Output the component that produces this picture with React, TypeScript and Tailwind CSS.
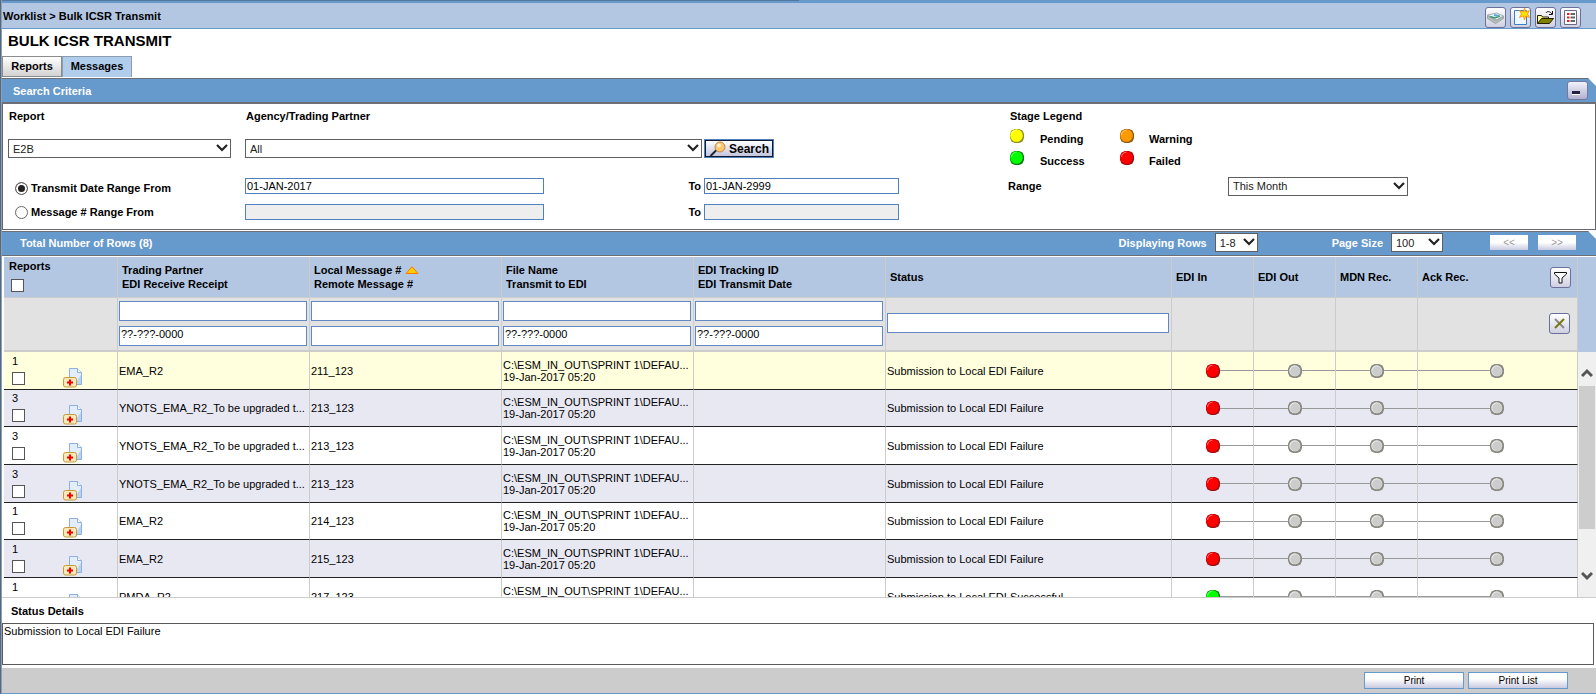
import { useState } from 'react';
import type { ReactNode } from 'react';

const rows = [
  { count: 1, partner: 'EMA_R2', message: '211_123', status: 'Submission to Local EDI Failure', ok: false },
  { count: 3, partner: 'YNOTS_EMA_R2_To be upgraded t...', message: '213_123', status: 'Submission to Local EDI Failure', ok: false },
  { count: 3, partner: 'YNOTS_EMA_R2_To be upgraded t...', message: '213_123', status: 'Submission to Local EDI Failure', ok: false },
  { count: 3, partner: 'YNOTS_EMA_R2_To be upgraded t...', message: '213_123', status: 'Submission to Local EDI Failure', ok: false },
  { count: 1, partner: 'EMA_R2', message: '214_123', status: 'Submission to Local EDI Failure', ok: false },
  { count: 1, partner: 'EMA_R2', message: '215_123', status: 'Submission to Local EDI Failure', ok: false },
  { count: 1, partner: 'PMDA_R2', message: '217_123', status: 'Submission to Local EDI Successful', ok: true },
];

const columns = [
  { top: 'Trading Partner', bottom: 'EDI Receive Receipt', mask: '??-???-0000' },
  { top: 'Local Message #', bottom: 'Remote Message #', mask: '', sorted: true },
  { top: 'File Name', bottom: 'Transmit to EDI', mask: '??-???-0000' },
  { top: 'EDI Tracking ID', bottom: 'EDI Transmit Date', mask: '??-???-0000' },
];

const stages = ['EDI In', 'EDI Out', 'MDN Rec.', 'Ack Rec.'];

const headCell = 'border-r border-b border-[#cccccc] bg-[#b3c7e3] px-1 text-left font-bold';
const filterCell = 'border-r border-b-2 border-[#cccccc] bg-[#e2e2e2] px-px pb-[2px]';
const filterInput = 'block h-5 w-full border border-[#6288c4] bg-white px-[1px] pb-1 text-[11px]';
const bodyCell = 'border-r border-[#cccccc] px-px whitespace-nowrap';
const iconButton = 'flex h-[21px] w-[21px] items-center justify-center rounded-[3px] border border-[#6b6f99] bg-gradient-to-b from-white to-[#cfcfe2]';
const checkbox = 'block h-[13px] w-[13px] appearance-none border border-[#555] bg-white checked:bg-[#555]';
const radio = 'h-[13px] w-[13px] appearance-none rounded-full border border-[#666] bg-white checked:bg-[#222] checked:shadow-[inset_0_0_0_2px_white]';
const pagerButton = 'flex h-[15px] w-[38px] items-center justify-center bg-gradient-to-b from-white from-50% to-[#c9c9e0] text-[10px]';
const printButton = 'h-[17px] w-[100px] border border-[#6699cc] bg-gradient-to-b from-white from-40% to-[#c9c9e0] leading-[14px]';
const barClip = '[clip-path:polygon(0_0,calc(100%_-_8px)_0,100%_8px,100%_100%,0_100%)]';

function Dot({ color }: { color: 'yellow' | 'orange' | 'green' | 'red' | 'gray' }) {
  const fills = { yellow: '#ffff00', orange: '#ff9900', green: '#00ff00', red: '#ff0000', gray: '#cccccc' };
  const edges = { yellow: '#8f8f20', orange: '#8a5a14', green: '#0a7a0a', red: '#a01010', gray: '#8a8a82' };
  return (
    <svg className="block h-[14px] w-[14px] shrink-0" viewBox="0 0 14 14" aria-hidden="true">
      <path d="M5 0h4l3.500 1.500L14 5v4l-1.500 3.500L9 14H5l-3.500-1.500L0 9V5l1.500-3.500z" fill={edges[color]} />
      <circle cx="6.500" cy="6.500" r="6.300" fill={color === 'gray' ? '#8a8a82' : fills[color]} />
      {color === 'gray' && <circle cx="6.800" cy="6.800" r="5.500" fill="#f2f2f2" />}
      <circle cx="7.200" cy="7.200" r="5" fill={fills[color]} />
      {color !== 'gray' && <path d="M1.500 6a5.500 5.500 0 0 1 5-4.800" fill="none" stroke="#fff" strokeOpacity=".45" />}
    </svg>
  );
}

function Select({ id, value, className }: { id: string; value: string; className: string }) {
  return (
    <span className={`relative inline-block ${className}`}>
      <select id={id} className="block h-[19px] w-full appearance-none border border-[#5f5f5f] bg-white pl-1 text-[11px] font-normal text-[#222]">
        <option>{value}</option>
      </select>
      <svg className="pointer-events-none absolute top-[5px] right-[3px] h-2 w-3" viewBox="0 0 12 8" fill="none" stroke="#222" strokeWidth="2.200" aria-hidden="true">
        <path d="M1 1l5 5 5-5" />
      </svg>
    </span>
  );
}

function TextInput({ id, label, value, disabled, className }: { id: string; label: string; value?: string; disabled?: boolean; className: string }) {
  return (
    <input
      id={id}
      aria-label={label}
      defaultValue={value}
      disabled={disabled}
      className={`h-4 border border-[#4f82bd] bg-white px-[1px] text-[11px] font-normal disabled:bg-[#eeeeee] ${className}`}
    />
  );
}

function ToolButton({ label, children }: { label: string; children: ReactNode }) {
  return (
    <button type="button" aria-label={label} className={iconButton}>
      <svg className="h-[19px] w-[19px] shrink-0" viewBox="0 0 19 19" fill="none" aria-hidden="true">
        {children}
      </svg>
    </button>
  );
}

function ReportIcon() {
  return (
    <svg className="block h-[20px] w-[20px]" viewBox="0 0 20 20" fill="none" aria-hidden="true">
      <path d="M6.500.500h8l4 4v12h-12z" fill="#e3edfb" stroke="#8fb0de" />
      <path d="M12 16l6-9v9z" fill="#b9d2f3" />
      <path d="M14.500.500v4h4" fill="#f7fbff" stroke="#8fb0de" />
      <rect x=".5" y="9.500" width="13" height="9.500" rx="2" fill="#f7eab8" stroke="#c29b3b" />
      <path d="M7 11.500v6M4 14.500h6" stroke="#f00000" strokeWidth="2" />
    </svg>
  );
}

function StageCell({ color, first, last }: { color: 'red' | 'green' | 'gray'; first: boolean; last: boolean }) {
  return (
    <td className="border-r border-[#cccccc] p-0">
      <div className="flex items-center pr-px">
        <span className={first ? 'flex-1' : 'h-px flex-1 bg-[#999]'} />
        <Dot color={color} />
        <span className={last ? 'flex-1' : '-mr-px h-px flex-1 bg-[#999]'} />
      </div>
    </td>
  );
}

export default function App() {
  const [mode, setMode] = useState('date');

  return (
    <div className="border-l border-[#666] bg-white font-['Liberation_Sans',Arial,sans-serif] text-[11px] leading-[14px] text-black">
      <div className="border-l border-[#7ba3d0]">
        {/* Breadcrumb bar */}
        <div className="h-px bg-[#6699cc]">
          <div className="h-px w-1/2 bg-[#55779c]" />
        </div>
        <header className="flex h-[28px] items-center justify-between border-t-2 border-b border-[#6699cc] bg-[#b3c7e3] pr-[15px]">
          <nav className="pl-px font-bold">Worklist &gt; Bulk ICSR Transmit</nav>
          <div className="flex gap-1 pt-1">
            <ToolButton label="Worklist">
              <path d="M1.500 7l9-2 7 3-7 4z" fill="#eef3f2" stroke="#a5b1b1" />
              <path d="M1.500 7.500v3l8 5 8-5V8.500l-8 4z" fill="#b4bfbd" stroke="#9aa5a3" />
              <path d="M4 8.500l5 1.500 5-2" stroke="#3f9a6b" strokeWidth="1.500" />
              <path d="M8 7l5 1" stroke="#5aa5d8" strokeWidth="2" />
            </ToolButton>
            <ToolButton label="New">
              <path d="M3.500 2.500h12v14h-12z" fill="#eef8ff" stroke="#3b7fc4" />
              <path d="M13.500 0l1.200 4 3.800-1.500-2 3.500 2 3.500-3.800-1.500-1.200 4-1.200-4-3.800 1.500 2-3.500-2-3.500L12.300 4z" fill="#ffe000" stroke="#ff8a00" strokeWidth=".8" />
            </ToolButton>
            <ToolButton label="Open">
              <path d="M1.500 15.500v-8h4l1 1.500h6v2" fill="#ffffa0" stroke="#222200" />
              <path d="M1.500 15.500l4-5h12l-4 5z" fill="#808000" stroke="#222200" />
              <path d="M10 5c1-2 4-2 6 1M16.500 3v3.500H13" stroke="#111" />
            </ToolButton>
            <ToolButton label="List">
              <path d="M3.500 2.500h12v14h-12z" fill="#fff" stroke="#666c88" />
              <path d="M6 6h2.500M6 9.500h2.500M6 13h2.500" stroke="#e02020" strokeWidth="2" />
              <path d="M9.500 6H14M9.500 9.500H14M9.500 13H14" stroke="#666" strokeWidth="2" />
            </ToolButton>
          </div>
        </header>

        <h1 className="pt-1 pl-[6px] text-[15px] leading-4 font-bold">BULK ICSR TRANSMIT</h1>

        {/* Tabs */}
        <div className="mt-[7px] flex items-end font-bold" role="tablist">
          <button type="button" role="tab" aria-selected="false" className="h-[21px] w-[60px] border border-[#8c8c8c] bg-gradient-to-b from-white to-[#d2d2d2] pb-[2px]">
            Reports
          </button>
          <button type="button" role="tab" aria-selected="true" className="h-[21px] w-[70px] border border-b-0 border-[#8c9cb0] bg-[#b0cdec] pb-[2px]">
            Messages
          </button>
        </div>

        {/* Search criteria */}
        <section className="mt-px">
          <div className={`flex h-[26px] items-center justify-between border-t border-b-2 border-[#6e6e76] bg-[#6699cc] pr-2 pl-[11px] ${barClip}`}>
            <h2 className="font-bold text-white">Search Criteria</h2>
            <button type="button" aria-label="Collapse" className="flex h-[19px] w-[21px] items-end rounded-[3px] border border-[#7477a0] bg-gradient-to-b from-[#f2f2fa] to-[#b0b0d0] pb-1 pl-1">
              <span className="h-[4px] w-2 border-b border-white bg-[#222244]" />
            </button>
          </div>
          <form className="grid grid-cols-[237px_459px_304px_1fr] grid-rows-[24px_41px_34px_18px] items-center border-r border-b border-l border-[#66666e] px-[5px] pb-2 font-bold">
            <label htmlFor="report" className="pl-px">Report</label>
            <label htmlFor="agency" className="col-span-2 pl-px">Agency/Trading Partner</label>
            <fieldset className="row-span-2 self-start pl-[2px]">
              <legend className="pt-[5px] pb-[6px]">Stage Legend</legend>
              <div className="grid grid-cols-[30px_80px_29px_80px] items-start gap-y-[5px]">
                <Dot color="yellow" />
                <span className="pt-[3px]">Pending</span>
                <Dot color="orange" />
                <span className="pt-[3px]">Warning</span>
                <Dot color="green" />
                <span className="pt-[3px]">Success</span>
                <Dot color="red" />
                <span className="pt-[3px]">Failed</span>
              </div>
            </fieldset>

            <Select id="report" value="E2B" className="w-[223px]" />
            <Select id="agency" value="All" className="w-[457px]" />
            <button type="button" className="flex h-[19px] w-[70px] items-center justify-between border-2 border-[#101a30] bg-gradient-to-b from-white to-[#c4c4de] px-[3px] text-[12px] outline-1 -outline-offset-1 outline-[#4f82bd]">
              <svg className="h-[15px] w-[18px]" viewBox="0 0 18 15" fill="none" aria-hidden="true">
                <path d="M1.500 15l6-6" stroke="#223" strokeWidth="2" />
                <circle cx="11" cy="6" r="5" fill="#ffc66b" stroke="#b98a4b" />
                <circle cx="10" cy="4.500" r="2" fill="#fff0cf" />
              </svg>
              Search
            </button>

            <label className="flex items-center gap-[3px] pt-1 pl-[7px]">
              <input type="radio" name="mode" checked={mode === 'date'} onChange={() => setMode('date')} className={radio} />
              Transmit Date Range From
            </label>
            <div className="flex items-center justify-between">
              <TextInput id="date-from" label="Transmit date from" value="01-JAN-2017" className="w-[299px]" />
              <label htmlFor="date-to" className="pr-[3px]">To</label>
            </div>
            <TextInput id="date-to" label="Transmit date to" value="01-JAN-2999" className="w-[195px]" />
            <div className="flex items-center">
              <label htmlFor="range" className="w-[220px]">Range</label>
              <Select id="range" value="This Month" className="w-[180px]" />
            </div>

            <label className="flex items-center gap-[3px] pl-[7px]">
              <input type="radio" name="mode" checked={mode === 'number'} onChange={() => setMode('number')} className={radio} />
              Message # Range From
            </label>
            <div className="flex items-center justify-between">
              <TextInput id="number-from" label="Message number from" disabled className="w-[299px]" />
              <label htmlFor="number-to" className="pr-[3px]">To</label>
            </div>
            <TextInput id="number-to" label="Message number to" disabled className="w-[195px]" />
          </form>
        </section>

        {/* Results bar */}
        <div className={`mt-px flex h-[25px] items-center border-t border-b border-[#6e6e76] bg-[#6699cc] pr-5 pb-[2px] pl-[18px] font-bold text-white ${barClip}`}>
          <h2 className="flex-1">Total Number of Rows (8)</h2>
          <label htmlFor="displaying" className="pr-2">Displaying Rows</label>
          <Select id="displaying" value="1-8" className="mr-[74px] w-[43px]" />
          <label htmlFor="page-size" className="pr-2">Page Size</label>
          <Select id="page-size" value="100" className="mr-[47px] w-[52px]" />
          <div className="flex gap-[10px] font-normal text-[#999]">
            <button type="button" aria-label="Previous page" disabled className={pagerButton}>&lt;&lt;</button>
            <button type="button" aria-label="Next page" disabled className={pagerButton}>&gt;&gt;</button>
          </div>
        </div>

        {/* Results table */}
        <div className="mt-px flex h-[341px] items-stretch overflow-hidden border-b border-[#cccccc] pl-[2px]">
          <div className="flex-1 overflow-hidden">
            <table className="w-full table-fixed border-separate border-spacing-0">
              <colgroup>
                <col className="w-[114px]" />
                <col className="w-[192px]" />
                <col className="w-[192px]" />
                <col className="w-[192px]" />
                <col className="w-[192px]" />
                <col />
                <col className="w-[82px]" />
                <col className="w-[82px]" />
                <col className="w-[82px]" />
                <col className="w-[160px]" />
              </colgroup>
              <thead>
                <tr className="h-[41px]">
                  <th className={headCell}>
                    <label className="flex flex-col gap-[6px] pb-[3px] pl-px">
                      Reports
                      <span className="pl-[2px]">
                        <input type="checkbox" className={checkbox} />
                      </span>
                    </label>
                  </th>
                  {columns.map((c) => (
                    <th key={c.top} className={headCell}>
                      <span className="flex items-center gap-1">
                        {c.top}
                        {c.sorted && (
                          <svg className="h-2 w-[14px]" viewBox="0 0 14 8" aria-hidden="true">
                            <path d="M7 .7l6 6.800H1z" fill="#ffcc00" stroke="#ff7a00" />
                          </svg>
                        )}
                      </span>
                      {c.bottom}
                    </th>
                  ))}
                  <th className={headCell}>Status</th>
                  {stages.slice(0, 3).map((s) => (
                    <th key={s} className={headCell}>{s}</th>
                  ))}
                  <th className={headCell}>
                    <span className="flex items-center justify-between pr-[2px]">
                      Ack Rec.
                      <ToolButton label="Filter">
                        <path d="M3.500 4.500h12v1.500l-4.500 4v5h-3v-5l-4.500-4z" fill="#fff" stroke="#111" />
                      </ToolButton>
                    </span>
                  </th>
                </tr>
                <tr className="h-[54px]">
                  <td className={filterCell} />
                  {columns.map((c) => (
                    <td key={c.top} className={filterCell}>
                      <div className="flex flex-col gap-[5px] pr-px">
                        <input aria-label={c.top} className={filterInput} />
                        <input aria-label={c.bottom} defaultValue={c.mask} className={filterInput} />
                      </div>
                    </td>
                  ))}
                  <td className={filterCell}>
                    <div className="pr-px">
                      <input aria-label="Status" className={filterInput} />
                    </div>
                  </td>
                  <td className={filterCell} />
                  <td className={filterCell} />
                  <td className={filterCell} />
                  <td className={filterCell}>
                    <div className="flex justify-end pr-[6px]">
                      <ToolButton label="Clear filter">
                        <path d="M5 5l9 9" stroke="#888" strokeWidth="2" />
                        <path d="M14 5l-9 9" stroke="#77770a" strokeWidth="2" />
                      </ToolButton>
                    </div>
                  </td>
                </tr>
              </thead>
              <tbody>
                {rows.map((r, i) => (
                  <tr
                    key={i}
                    className={`${i % 3 === 1 ? 'h-[37px]' : 'h-[38px]'} ${i === 0 ? 'bg-[#ffffdd]' : i % 2 ? 'bg-[#e8e8f3]' : 'bg-white'} [&>td]:border-b [&>td]:border-b-[#222]`}
                  >
                    <td className="border-r border-[#cccccc] p-0">
                      <div className="flex h-[34px] items-end justify-between pr-[34px] pl-2">
                        <label className="flex flex-col self-start pt-px leading-3">
                          <span className="h-[17px]">{r.count}</span>
                          <input type="checkbox" className={checkbox} />
                        </label>
                        <ReportIcon />
                      </div>
                    </td>
                    <td className={bodyCell}>{r.partner}</td>
                    <td className={bodyCell}>{r.message}</td>
                    <td className={`${bodyCell} leading-3`}>
                      <div>C:\ESM_IN_OUT\SPRINT 1\DEFAU...</div>
                      <div>19-Jan-2017 05:20</div>
                    </td>
                    <td className={bodyCell} />
                    <td className={bodyCell}>{r.status}</td>
                    {stages.map((s, k) => (
                      <StageCell key={s} color={k > 0 ? 'gray' : r.ok ? 'green' : 'red'} first={k === 0} last={k === 3} />
                    ))}
                  </tr>
                ))}
              </tbody>
            </table>
          </div>
          {/* Scroll rail */}
          <div className="flex w-[18px] flex-col bg-[#f0f0f0]">
            <div className="h-[95px] bg-[#b3c7e3]" />
            <button type="button" aria-label="Scroll up" className="flex h-[34px] items-end justify-center pb-2">
              <svg className="h-[10px] w-3" viewBox="0 0 12 10" fill="none" stroke="#555" strokeWidth="3" aria-hidden="true">
                <path d="M1 8l5-5 5 5" />
              </svg>
            </button>
            <div className="ml-px h-[143px] w-4 bg-[#cdcdcd]" />
            <button type="button" aria-label="Scroll down" className="mt-auto flex h-[26px] items-start justify-center">
              <svg className="h-[10px] w-3" viewBox="0 0 12 10" fill="none" stroke="#555" strokeWidth="3" aria-hidden="true">
                <path d="M1 2l5 5 5-5" />
              </svg>
            </button>
          </div>
        </div>

        {/* Status details */}
        <label htmlFor="details" className="block pt-[6px] pb-[5px] pl-[9px] font-bold">Status Details</label>
        <div className="pr-[2px]">
          <textarea id="details" readOnly defaultValue="Submission to Local EDI Failure" className="block h-[42px] w-full resize-none border border-[#5a5a5a] px-[1px]" />
        </div>

        <footer className="mt-[3px] flex h-[26px] items-center justify-end gap-1 border-b border-[#6699cc] bg-[#cccccc] pr-7 text-[10px]">
          <button type="button" className={printButton}>Print</button>
          <button type="button" className={printButton}>Print List</button>
        </footer>
      </div>
    </div>
  );
}
